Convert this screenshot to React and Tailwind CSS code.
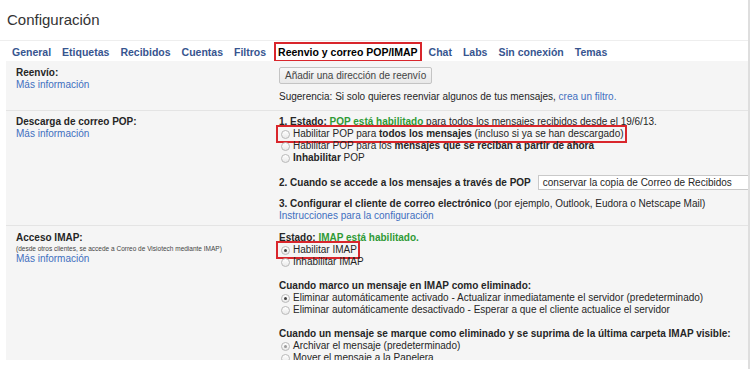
import React from 'react';

const tabs = ['General', 'Etiquetas', 'Recibidos', 'Cuentas', 'Filtros'];
const tabsAfter = ['Chat', 'Labs', 'Sin conexión', 'Temas'];

function Radio({ checked, faint, label, boxed }) {
  return (
    <div className="flex h-[12px] items-center">
      <span
        className={`flex items-center ${boxed ? 'outline-2 outline-offset-[1px] outline-[#d9262c]' : ''}`}
      >
        <span className="ml-[2px] mr-[3px] flex h-[9px] w-[9px] items-center justify-center rounded-full border border-[#b9b9b9] bg-gradient-to-b from-white to-[#e9e9e9]">
          {checked && (
            <span className={`h-[3px] w-[3px] rounded-full ${faint ? 'bg-[#9a9a9a]' : 'bg-[#444]'}`} />
          )}
        </span>
        <span>{label}</span>
      </span>
    </div>
  );
}

function Link({ children }) {
  return <span className="text-[#3f6fc0]">{children}</span>;
}

export default function App() {
  return (
    <div className="flex h-[369px] w-[751px] overflow-hidden bg-white font-['Liberation_Sans',Arial,sans-serif] text-[10px] leading-[12px] text-[#262626]">
      <div className="flex w-[748px] flex-col">
        <div className="h-[40px] pl-[7px] pt-[11px] text-[15px] leading-[18px] text-[#333]">Configuración</div>

        <div className="flex h-[21px] items-center gap-[11px] border-t border-[#eeeeee] pl-[12px] pt-[2px] text-[10.5px] font-bold text-[#37558f]">
          {tabs.map((t) => (
            <span key={t}>{t}</span>
          ))}
          <span className="ml-[1px] text-black outline-2 outline-offset-[2px] outline-[#d9262c]">Reenvio y correo POP/IMAP</span>
          {tabsAfter.map((t) => (
            <span key={t}>{t}</span>
          ))}
        </div>

        <div className="ml-[6px] h-[299px] overflow-hidden bg-[#f5f5f5]">
          {/* Reenvío */}
          <div className="grid grid-cols-[263px_1fr] border-b border-[#e4e4e4] pb-[7px] pl-[10px] pt-[6px]">
            <div>
              <div className="font-bold">Reenvío:</div>
              <Link>Más información</Link>
            </div>
            <div>
              <button className="h-[17px] rounded-[2px] border border-[#c4c4c4] bg-gradient-to-b from-[#f8f8f8] to-[#e8e8e8] px-[5px] text-[10px] leading-[15px] text-[#444]">
                Añadir una dirección de reenvío
              </button>
              <div className="mt-[7px]">
                Sugerencia: Si solo quieres reenviar algunos de tus mensajes, <Link>crea un filtro.</Link>
              </div>
            </div>
          </div>

          {/* POP */}
          <div className="grid grid-cols-[263px_1fr] border-b border-[#e4e4e4] pb-[3px] pl-[10px] pt-[5px]">
            <div>
              <div className="font-bold">Descarga de correo POP:</div>
              <Link>Más información</Link>
            </div>
            <div className="min-w-0">
              <div>
                <b>1. Estado: </b>
                <b className="text-[#2f9a35]">POP está habilitado</b> para todos los mensajes recibidos desde el 19/6/13.
              </div>
              <Radio
                boxed
                label={
                  <>
                    Habilitar POP para <b>todos los mensajes</b> (incluso si ya se han descargado)
                  </>
                }
              />
              <Radio
                label={
                  <>
                    Habilitar POP para los <b>mensajes que se reciban a partir de ahora</b>
                  </>
                }
              />
              <Radio
                label={
                  <>
                    <b>Inhabilitar</b> POP
                  </>
                }
              />
              <div className="mt-[11px] flex h-[15px] items-center whitespace-nowrap">
                <b>2. Cuando se accede a los mensajes a través de POP</b>
                <div className="ml-[7px] flex h-[15px] w-[220px] shrink-0 items-center border border-[#c9c9c9] bg-white pl-[4px]">
                  conservar la copia de Correo de Recibidos
                </div>
              </div>
              <div className="mt-[8px]">
                <b>3. Configurar el cliente de correo electrónico</b> (por ejemplo, Outlook, Eudora o Netscape Mail)
              </div>
              <Link>Instrucciones para la configuración</Link>
            </div>
          </div>

          {/* IMAP */}
          <div className="grid grid-cols-[263px_1fr] pl-[10px] pt-[6px]">
            <div>
              <div className="font-bold">Acceso IMAP:</div>
              <div className="text-[6.5px] leading-[9px] text-[#444]">
                (desde otros clientes, se accede a Correo de Visiotech mediante IMAP)
              </div>
              <Link>Más información</Link>
            </div>
            <div className="whitespace-nowrap">
              <div className="font-bold">
                Estado: <span className="text-[#2f9a35]">IMAP está habilitado.</span>
              </div>
              <Radio boxed checked label="Habilitar IMAP" />
              <Radio label="Inhabilitar IMAP" />
              <div className="mt-[12px] font-bold">Cuando marco un mensaje en IMAP como eliminado:</div>
              <Radio checked label="Eliminar automáticamente activado - Actualizar inmediatamente el servidor (predeterminado)" />
              <Radio label="Eliminar automáticamente desactivado - Esperar a que el cliente actualice el servidor" />
              <div className="mt-[12px] font-bold">
                Cuando un mensaje se marque como eliminado y se suprima de la última carpeta IMAP visible:
              </div>
              <Radio checked faint label="Archivar el mensaje (predeterminado)" />
              <Radio label="Mover el mensaje a la Papelera" />
            </div>
          </div>
        </div>
      </div>
      <div className="w-[2px] bg-[#dedede]" />
      <div className="w-[1px]" />
    </div>
  );
}
